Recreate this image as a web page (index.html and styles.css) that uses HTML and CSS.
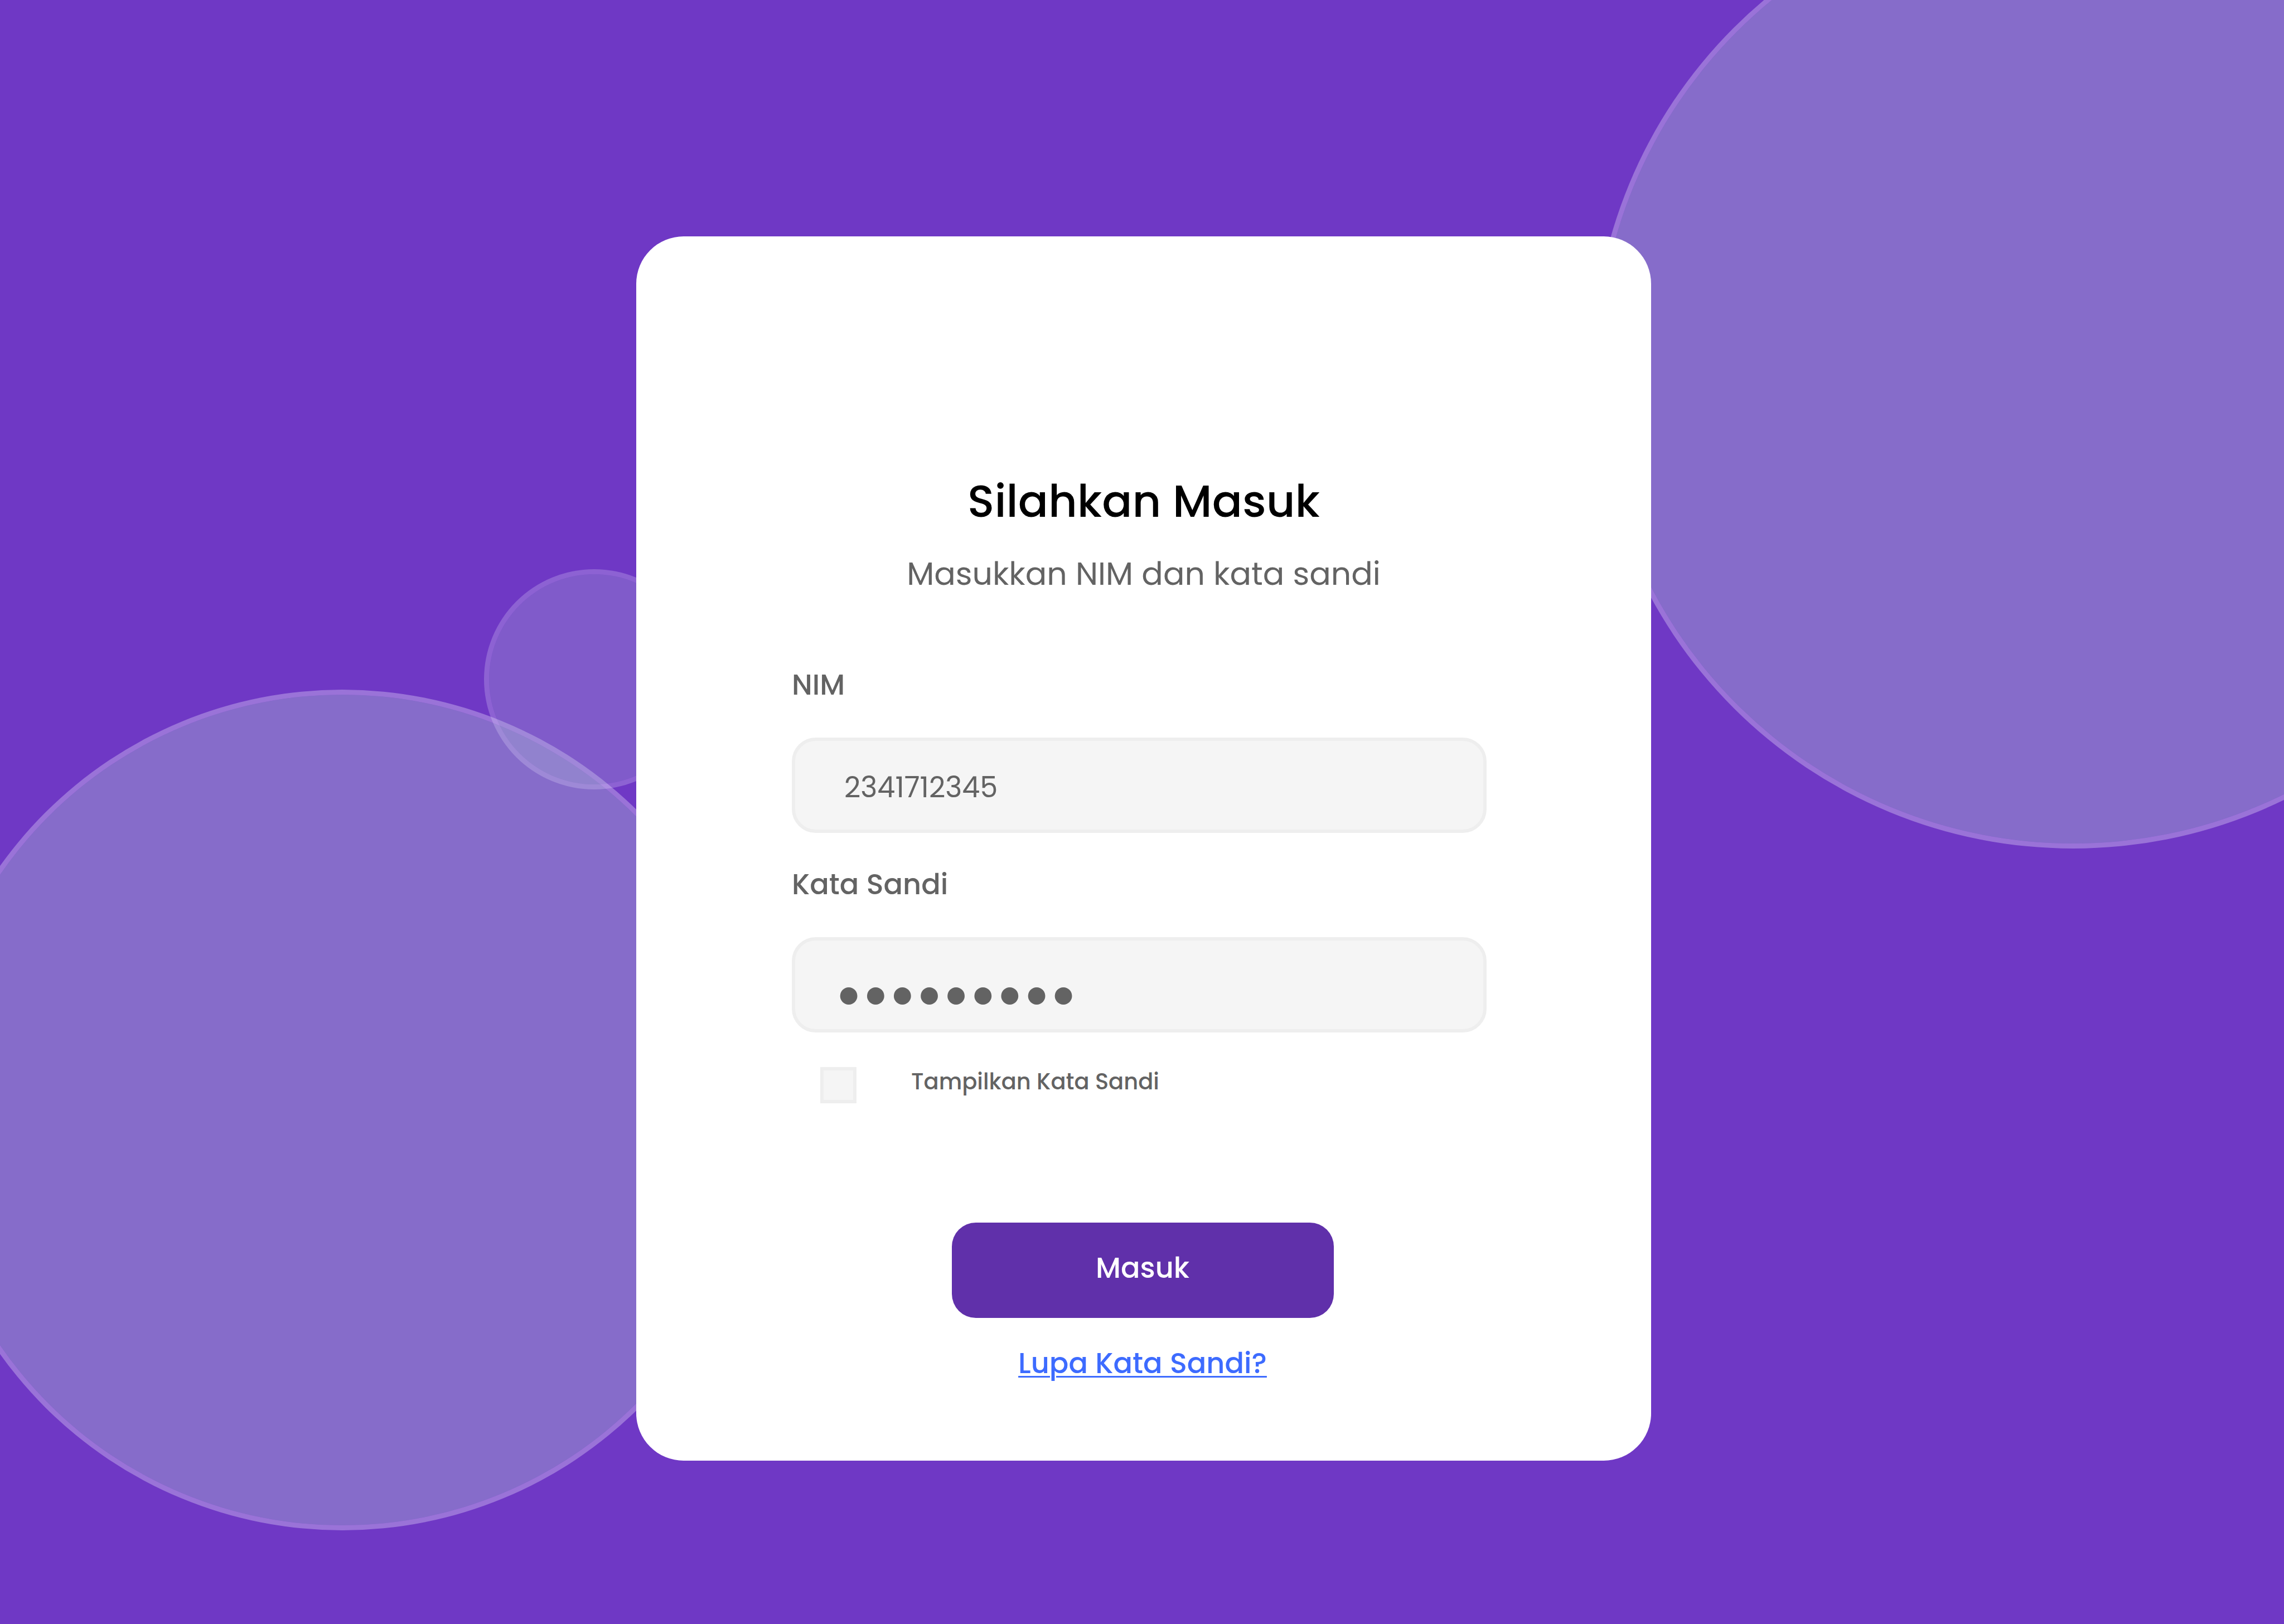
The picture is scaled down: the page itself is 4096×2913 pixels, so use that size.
FILE: index.html
```html
<!DOCTYPE html>
<html lang="id">
<head>
  <meta charset="utf-8">
  <meta name="viewport" content="width=device-width, initial-scale=1">
  <title>Silahkan Masuk</title>
  <link rel="stylesheet" href="styles.css">
</head>
<body>
  <div class="backdrop" aria-hidden="true">
    <span class="bubble bubble-left"></span>
    <span class="bubble bubble-small"></span>
    <span class="bubble bubble-right"></span>
  </div>

  <main class="page">
    <section class="card">
      <header class="intro">
        <h1 class="title">Silahkan Masuk</h1>
        <p class="subtitle">Masukkan NIM dan kata sandi</p>
      </header>

      <form class="form" action="#" method="post">
        <div class="fields">
          <div class="field">
            <label class="label" for="nim">NIM</label>
            <input class="input" id="nim" name="nim" type="text" inputmode="numeric" value="2341712345">
          </div>
          <div class="field">
            <label class="label" for="sandi">Kata Sandi</label>
            <input class="input input-password" id="sandi" name="sandi" type="password" value="rahasia12">
          </div>
          <div class="toggle">
            <input class="checkbox" id="tampilkan" name="tampilkan" type="checkbox">
            <label class="toggle-label" for="tampilkan">Tampilkan Kata Sandi</label>
          </div>
        </div>
        <button class="button" type="submit">Masuk</button>
        <a class="link" href="#">Lupa Kata Sandi?</a>
      </form>
    </section>
  </main>
</body>
</html>
```
FILE: styles.css
```css
:root {
  --purple: #6f38c5;
  --purple-dark: #6030aa;
  --blue: #3d6bff;
  --grey: #636363;
  --field: #f5f5f5;
  --line: #eeeeee;
}

*,
*::before,
*::after {
  box-sizing: border-box;
}

body {
  margin: 0;
  position: relative;
  background: var(--purple);
  color: var(--grey);
  font-family: Poppins, Inter, "Liberation Sans", sans-serif;
}

/* Decorative circles behind the card */
.backdrop {
  position: absolute;
  inset: 0;
  overflow: hidden;
}

.bubble {
  position: absolute;
  border: 9px solid rgba(234, 226, 253, 0.35);
  border-radius: 50%;
  background: rgba(177, 206, 213, 0.35) padding-box;
}

.bubble-left {
  top: 1237px;
  left: -140px;
  width: 1508px;
  height: 1508px;
}

.bubble-small {
  top: 1021px;
  left: 868px;
  width: 395px;
  height: 395px;
  border-color: rgba(231, 223, 255, 0.25);
  background-color: rgba(179, 195, 220, 0.25);
}

.bubble-right {
  top: -202px;
  right: -484px;
  width: 1724px;
  height: 1724px;
}

/* Card */
.page {
  position: relative;
  display: flex;
  justify-content: center;
  align-items: flex-start;
  min-height: 100vh;
  padding: 424px 0 292px 6px;
}

.card {
  display: flex;
  flex-direction: column;
  align-items: center;
  gap: 123px;
  width: 100%;
  max-width: 1820px;
  padding: 423px 0 139px;
  border-radius: 85px;
  background: #fff;
}

.intro {
  display: flex;
  flex-direction: column;
  gap: 38px;
  text-align: center;
}

.title {
  margin: 0;
  color: #000;
  font-size: 80px;
  font-weight: 500;
  line-height: 104px;
}

.subtitle {
  margin: 0;
  font-size: 57px;
  line-height: 80px;
}

/* Form */
.form {
  display: flex;
  flex-direction: column;
  align-items: center;
  width: 100%;
  padding-right: 4px;
}

.fields {
  display: flex;
  flex-direction: column;
  gap: 56px;
  width: 100%;
  padding: 0 291px 0 279px;
}

.field {
  display: flex;
  flex-direction: column;
  gap: 59px;
}

.label {
  font-size: 51px;
  font-weight: 500;
  line-height: 72px;
}

.input {
  width: 100%;
  height: 171px;
  padding: 8px 88px 0;
  border: 6px solid var(--line);
  border-radius: 43px;
  background: var(--field);
  color: inherit;
  font-family: inherit;
  font-size: 51px;
}

.input-password {
  padding: 25px 72px 0;
  font-family: Lato, sans-serif;
  font-size: 83px;
}

.toggle {
  display: flex;
  align-items: flex-start;
  gap: 98px;
  padding: 6px 0 0 51px;
}

.checkbox {
  appearance: none;
  width: 65px;
  height: 65px;
  margin: 0;
  border: 6px solid var(--line);
  background: var(--field);
}

.checkbox:checked {
  background: var(--purple-dark);
}

.toggle-label {
  font-size: 40px;
  font-weight: 500;
  line-height: 52px;
}

.button {
  width: 685px;
  max-width: 100%;
  height: 171px;
  margin-top: 214px;
  padding: 0 0 8px;
  border: 0;
  border-radius: 43px;
  background: var(--purple-dark);
  color: #fff;
  font-family: inherit;
  font-size: 51px;
  font-weight: 500;
  cursor: pointer;
}

.link {
  margin-top: 45px;
  color: var(--blue);
  font-size: 51px;
  font-weight: 500;
  line-height: 72px;
  text-decoration-thickness: 3px;
  text-underline-offset: 5px;
}
```
